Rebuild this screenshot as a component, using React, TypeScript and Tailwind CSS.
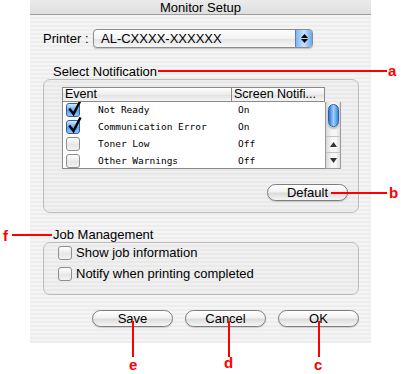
import React from "react";

type Row = { label: string; value: string; checked: boolean };

const rows: Row[] = [
  { label: "Not Ready", value: "On", checked: true },
  { label: "Communication Error", value: "On", checked: true },
  { label: "Toner Low", value: "Off", checked: false },
  { label: "Other Warnings", value: "Off", checked: false },
];

const ui = "font-['Liberation_Sans',Arial,sans-serif] text-black";

const AquaCheck = ({ checked }: { checked: boolean }) => (
  <div
    className={`relative w-[14px] h-[14px] shrink-0 rounded-[3px] border ${
      checked
        ? "border-[#3a5f95] bg-[linear-gradient(#d6ebff,#5aa2f2_55%,#8ec6ff)]"
        : "border-[#8e8e8e] bg-[linear-gradient(#ffffff,#e6e6e6_60%,#f4f4f4)]"
    }`}
  >
    {checked && (
      <svg className="absolute left-[1px] top-[-4px]" width="14" height="17" viewBox="0 0 14 17">
        <path d="M2 9.5 L5.5 14 L12 1.5" fill="none" stroke="#000" strokeWidth="2.4" strokeLinecap="square" />
      </svg>
    )}
  </div>
);

const PillButton = ({ label, width = "w-[81px]" }: { label: string; width?: string }) => (
  <div
    className={`${width} h-[17px] flex items-center justify-center rounded-full border border-[#7d7d7d] bg-[linear-gradient(#ffffff,#f2f2f2_45%,#dcdcdc_55%,#f6f6f6)] shadow-[0_1px_1px_rgba(0,0,0,0.15)] text-[13px] leading-none ${ui}`}
  >
    {label}
  </div>
);

const RedLetter = ({ children, className }: { children: string; className: string }) => (
  <span
    className={`absolute text-[15px] leading-none font-bold text-[#ff0000] font-['Liberation_Sans',Arial,sans-serif] ${className}`}
  >
    {children}
  </span>
);

export default function App() {
  return (
    <div className="relative w-[401px] h-[374px] bg-white overflow-hidden">
      <div className="ml-[30px] w-[341px] h-[343px] flex flex-col bg-[repeating-linear-gradient(0deg,#ededed_0px,#ededed_2px,#f4f4f4_2px,#f4f4f4_4px)]">
        {/* title bar */}
        <div className="h-[15px] flex items-center justify-center bg-[linear-gradient(#ebebeb,#dedede)] border-b border-[#9c9c9c]">
          <span className={`text-[13px] leading-none ${ui}`}>Monitor Setup</span>
        </div>

        {/* printer popup */}
        <div className="mt-[14px] ml-[13px] h-[19px] flex items-center">
          <span className={`text-[13px] w-[50px] ${ui}`}>Printer :</span>
          <div className="w-[220px] h-[19px] flex rounded-[4px] border border-[#8c8c8c] bg-[linear-gradient(#ffffff,#f3f3f3_50%,#e4e4e4_55%,#f8f8f8)] shadow-[0_1px_1px_rgba(0,0,0,0.2)] overflow-hidden">
            <span className={`flex-1 pl-[7px] text-[13px] leading-[17px] ${ui}`}>AL-CXXXX-XXXXXX</span>
            <div className="w-[17px] h-full flex flex-col items-center justify-center gap-[1px] border-l border-[#5d7fb0] bg-[linear-gradient(90deg,#7fb5f4,#c7e2ff_50%,#6aa6ee)]">
              <svg width="7" height="4" viewBox="0 0 7 4"><path d="M3.5 0 L7 4 L0 4 Z" fill="#000" /></svg>
              <svg width="7" height="4" viewBox="0 0 7 4"><path d="M0 0 L7 0 L3.5 4 Z" fill="#000" /></svg>
            </div>
          </div>
        </div>

        {/* select notification */}
        <div className={`mt-[16px] ml-[23px] h-[15px] text-[13px] leading-[15px] ${ui}`}>Select Notification</div>
        <div className="ml-[13px] w-[316px] h-[134px] rounded-[7px] border border-[#bdbdbd] bg-black/[0.015] flex flex-col">
          <div className="mt-[7px] ml-[18px] w-[279px] flex flex-col">
            <div className="h-[15px] flex">
              <div className={`w-[170px] border border-[#8a8a8a] pl-[2px] text-[12.5px] leading-[13px] bg-[linear-gradient(#ffffff,#ececec_50%,#e2e2e2_55%,#f5f5f5)] ${ui}`}>
                Event
              </div>
              <div className={`w-[93px] border border-l-0 border-[#8a8a8a] pl-[2px] text-[12.5px] leading-[13px] whitespace-nowrap overflow-hidden bg-[linear-gradient(#ffffff,#ececec_50%,#e2e2e2_55%,#f5f5f5)] ${ui}`}>
                Screen Notifi...
              </div>
            </div>
            <div className="h-[67px] flex">
              <div className="w-[263px] bg-white border-l border-b border-[#8a8a8a] overflow-hidden">
                {rows.map((r) => (
                  <div key={r.label} className="h-[16.75px] flex items-center">
                    <div className="w-[35px] pl-[3px]">
                      <AquaCheck checked={r.checked} />
                    </div>
                    <span className="w-[135px] text-[9.5px] font-['DejaVu_Sans_Mono',monospace] text-black">{r.label}</span>
                    <span className="pl-[5px] text-[9.5px] font-['DejaVu_Sans_Mono',monospace] text-black">{r.value}</span>
                  </div>
                ))}
              </div>
              <div className="w-[16px] flex flex-col bg-[linear-gradient(90deg,#d8d8d8,#f7f7f7_40%,#f7f7f7_70%,#e0e0e0)] border border-t-0 border-[#9a9a9a]">
                <div className="flex-1 flex justify-center pt-[2px]">
                  <div className="w-[11px] h-[23px] rounded-full border border-[#2a5fa8] bg-[linear-gradient(90deg,#2d74d6,#9fd0ff_50%,#3d86e6)] shadow-[0_2px_2px_rgba(0,0,0,0.25)]" />
                </div>
                <div className="h-[16px] flex items-center justify-center border-t border-[#c4c4c4]">
                  <svg width="7" height="5" viewBox="0 0 7 5"><path d="M3.5 0 L7 5 L0 5 Z" fill="#333" /></svg>
                </div>
                <div className="h-[16px] flex items-center justify-center border-t border-[#c4c4c4]">
                  <svg width="7" height="5" viewBox="0 0 7 5"><path d="M0 0 L7 0 L3.5 5 Z" fill="#333" /></svg>
                </div>
              </div>
            </div>
          </div>
          <div className="mt-[15px] mr-[10px] self-end">
            <PillButton label="Default" />
          </div>
        </div>

        {/* job management */}
        <div className={`mt-[14px] ml-[23px] h-[15px] text-[13px] leading-[15px] ${ui}`}>Job Management</div>
        <div className="ml-[13px] w-[316px] h-[53px] rounded-[7px] border border-[#bdbdbd] bg-black/[0.015] flex flex-col pl-[14px] pt-[3px] gap-[7px]">
          <div className="flex items-center gap-[4px] h-[14px]">
            <AquaCheck checked={false} />
            <span className={`text-[13px] ${ui}`}>Show job information</span>
          </div>
          <div className="flex items-center gap-[4px] h-[14px]">
            <AquaCheck checked={false} />
            <span className={`text-[13px] ${ui}`}>Notify when printing completed</span>
          </div>
        </div>

        {/* bottom buttons */}
        <div className="mt-[15px] ml-[62px] flex gap-[12px]">
          <PillButton label="Save" />
          <PillButton label="Cancel" />
          <PillButton label="OK" />
        </div>
      </div>

      {/* callouts */}
      <div className="absolute left-[158px] top-[70px] w-[229px] h-[2px] bg-[#ff0000]" />
      <RedLetter className="left-[388px] top-[63px]">a</RedLetter>
      <div className="absolute left-[331px] top-[192px] w-[56px] h-[2px] bg-[#ff0000]" />
      <RedLetter className="left-[389px] top-[185px]">b</RedLetter>
      <div className="absolute left-[12px] top-[234px] w-[40px] h-[2px] bg-[#ff0000]" />
      <RedLetter className="left-[3px] top-[228px]">f</RedLetter>
      <div className="absolute left-[132px] top-[321px] w-[2px] h-[36px] bg-[#ff0000]" />
      <RedLetter className="left-[129px] top-[357px]">e</RedLetter>
      <div className="absolute left-[228px] top-[321px] w-[2px] h-[36px] bg-[#ff0000]" />
      <RedLetter className="left-[224px] top-[355px]">d</RedLetter>
      <div className="absolute left-[318px] top-[321px] w-[2px] h-[36px] bg-[#ff0000]" />
      <RedLetter className="left-[314px] top-[357px]">c</RedLetter>
    </div>
  );
}
